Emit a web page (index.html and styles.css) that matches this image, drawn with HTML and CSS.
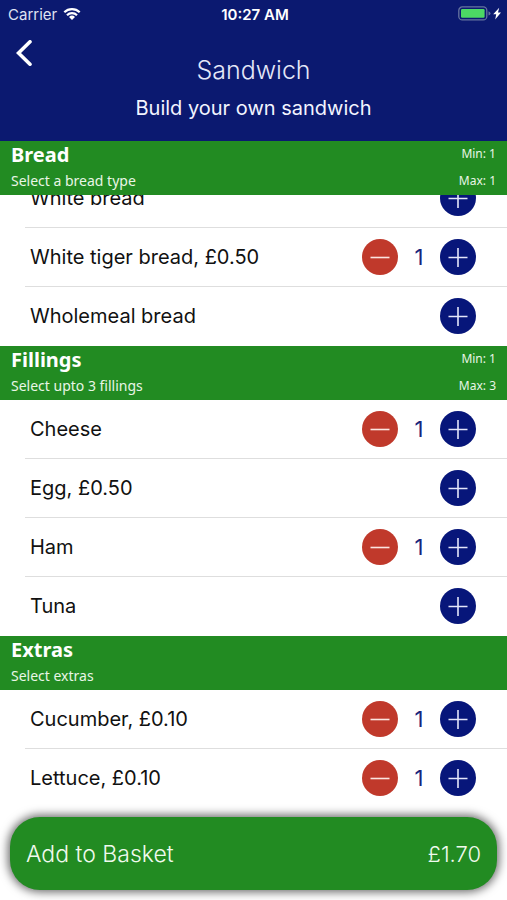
FILE: index.html
```html
<!DOCTYPE html>
<html lang="en">
<head>
<meta charset="utf-8">
<meta name="viewport" content="width=device-width, initial-scale=1">
<title>Sandwich</title>
<link rel="stylesheet" href="styles.css">
</head>
<body>
<svg class="defs" aria-hidden="true">
  <symbol id="plus" viewBox="0 0 36 36"><path d="M18 9v19M8.500 18.500h19" fill="none" stroke="#e4e6fa" stroke-width="1.600"/></symbol>
  <symbol id="minus" viewBox="0 0 36 36"><path d="M8.500 18.500h19" fill="none" stroke="#fbe5e0" stroke-width="1.600"/></symbol>
</svg>
<header class="top">
  <div class="status">
    <div class="carrier">Carrier
      <svg width="18" height="14" viewBox="0 0 18 14" aria-hidden="true"><g fill="none" stroke="#fff" stroke-width="2.200"><path d="M1.300 5.300a11 11 0 0 1 15.400 0"/><path d="M4 8.300a7 7 0 0 1 10 0"/></g><path d="M9 13l-3-3.100a4.300 4.300 0 0 1 6 0z" fill="#fff"/></svg>
    </div>
    <div class="time">10:27 AM</div>
    <div class="power">
      <svg width="44" height="16" viewBox="0 0 44 16" aria-hidden="true"><rect x=".8" y=".9" width="28" height="13" rx="3.500" fill="none" stroke="#66749f" stroke-width="1.300"/><rect x="3" y="3.100" width="23.600" height="8.600" rx="1.200" fill="#4cd964"/><path d="M30.500 5.200q2 .8 2 2.200t-2 2.200z" fill="#66749f"/><path d="M41.200 1.700l-6 6.500h3l-1 5.300 5.800-6.900h-3z" fill="#fff"/></svg>
    </div>
  </div>
  <button class="back" aria-label="Back"><svg width="16" height="26" viewBox="0 0 16 26" aria-hidden="true"><path d="M14 1.800L2.500 13 14 24.200" fill="none" stroke="#fff" stroke-width="3.600" stroke-linecap="round" stroke-linejoin="miter"/></svg></button>
  <h1>Sandwich</h1>
  <p class="tagline">Build your own sandwich</p>
</header>
<main>
  <section>
    <header class="group"><h2>Bread</h2><span class="limit">Min: 1</span><p>Select a bread type</p><span class="limit">Max: 1</span></header>
    <ul class="scrolled">
      <li><span class="name">White bread</span><button class="add" aria-label="Add White bread"><svg><use href="#plus"/></svg></button></li>
      <li><span class="name">White tiger bread, £0.50</span><button class="remove" aria-label="Remove White tiger bread"><svg><use href="#minus"/></svg></button><span class="count">1</span><button class="add" aria-label="Add White tiger bread"><svg><use href="#plus"/></svg></button></li>
      <li><span class="name">Wholemeal bread</span><button class="add" aria-label="Add Wholemeal bread"><svg><use href="#plus"/></svg></button></li>
    </ul>
  </section>
  <section>
    <header class="group"><h2>Fillings</h2><span class="limit">Min: 1</span><p>Select upto 3 fillings</p><span class="limit">Max: 3</span></header>
    <ul>
      <li><span class="name">Cheese</span><button class="remove" aria-label="Remove Cheese"><svg><use href="#minus"/></svg></button><span class="count">1</span><button class="add" aria-label="Add Cheese"><svg><use href="#plus"/></svg></button></li>
      <li><span class="name">Egg, £0.50</span><button class="add" aria-label="Add Egg"><svg><use href="#plus"/></svg></button></li>
      <li><span class="name">Ham</span><button class="remove" aria-label="Remove Ham"><svg><use href="#minus"/></svg></button><span class="count">1</span><button class="add" aria-label="Add Ham"><svg><use href="#plus"/></svg></button></li>
      <li><span class="name">Tuna</span><button class="add" aria-label="Add Tuna"><svg><use href="#plus"/></svg></button></li>
    </ul>
  </section>
  <section>
    <header class="group"><h2>Extras</h2><p>Select extras</p></header>
    <ul>
      <li><span class="name">Cucumber, £0.10</span><button class="remove" aria-label="Remove Cucumber"><svg><use href="#minus"/></svg></button><span class="count">1</span><button class="add" aria-label="Add Cucumber"><svg><use href="#plus"/></svg></button></li>
      <li><span class="name">Lettuce, £0.10</span><button class="remove" aria-label="Remove Lettuce"><svg><use href="#minus"/></svg></button><span class="count">1</span><button class="add" aria-label="Add Lettuce"><svg><use href="#plus"/></svg></button></li>
    </ul>
  </section>
</main>
<footer><button class="basket"><span>Add to Basket</span><span class="total">£1.70</span></button></footer>
</body>
</html>
```
FILE: styles.css
```css
* { box-sizing: border-box; }
body { margin: 0; background: #fff; color: #111; font-family: Inter, "Liberation Sans", sans-serif; }
h1, h2, p, ul { margin: 0; padding: 0; font-weight: 400; }
button { border: 0; padding: 0; background: none; font: inherit; color: inherit; cursor: pointer; }
svg { display: block; }
.defs { display: none; }

.top { display: flex; flex-direction: column; background: #0b1970; color: #fff; padding-bottom: 19px; text-align: center; }
.status { display: grid; grid-template-columns: 1fr auto 1fr; align-items: center; height: 28px; padding: 0 5px 0 8px; font-size: 15px; }
.carrier { display: flex; align-items: center; gap: 6px; color: #dfe2f2; }
.time { font-weight: 600; }
.power { display: flex; justify-content: flex-end; }
.back { align-self: flex-start; margin: 12px 0 0 16px; }
.top h1 { margin-top: -12px; font-size: 25px; font-weight: 300; line-height: 32px; color: #e4e7f8; }
.tagline { margin-top: 8px; font-size: 20px; line-height: 28px; color: #f2f4ff; }

.group { display: grid; grid-template-columns: 1fr auto; grid-template-rows: 27px 27px; padding: 0 11px; background: #228b22; color: #e9f6e6; font-family: "Noto Sans", sans-serif; }
.group h2 { font-size: 20px; font-weight: 700; line-height: 27px; color: #fff; }
.group p { grid-column: 1; font-size: 14px; line-height: 26px; }
.limit { font-size: 12px; line-height: 26px; text-align: right; }

ul { list-style: none; }
.scrolled { overflow: hidden; }
.scrolled li:first-child { margin-top: -26px; }
li { display: flex; align-items: center; height: 59px; margin-left: 25px; padding: 0 31px 0 5px; border-bottom: 1px solid #dedede; }
li:last-child { border-bottom-color: transparent; }
.name { flex: 1; font-size: 20px; line-height: 28px; }
.count { width: 42px; text-align: center; font-size: 22px; color: #17267c; }
.add, .remove { width: 36px; height: 36px; border-radius: 50%; background: #07167a; }
.remove { background: #c0392b; }
.add svg, .remove svg { width: 36px; height: 36px; }

footer { padding: 9px 10px 10px; }
.basket { display: flex; justify-content: space-between; align-items: center; width: 100%; height: 73px; padding: 0 16px; border-radius: 30px; background: #228b22; color: #f0faee; font-size: 23px; font-weight: 300; box-shadow: 0 0 10px 2px rgba(0, 0, 0, .6); }
.total { font-size: 22px; }
```
